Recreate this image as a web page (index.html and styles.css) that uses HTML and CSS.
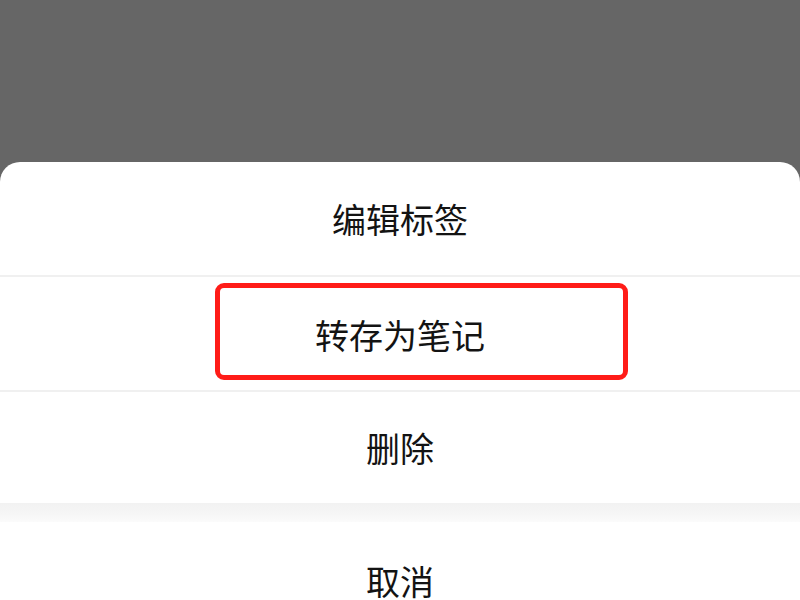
FILE: index.html
```html
<!DOCTYPE html>
<html lang="zh-CN">
<head>
    <meta charset="UTF-8">
    <meta name="viewport" content="width=device-width, initial-scale=1.0">
    <title>操作菜单</title>
    <link rel="stylesheet" href="styles.css">
</head>
<body>
    <!-- Dimmed background -->
    <div class="mask"></div>

    <!-- Action sheet -->
    <div class="sheet">
        <div class="sheet-group">
            <div class="sheet-item">编辑标签</div>
            <div class="sheet-item highlighted">
                <span>转存为笔记</span>
                <div class="mark-box"></div>
            </div>
            <div class="sheet-item">删除</div>
        </div>
        <div class="sheet-gap"></div>
        <div class="sheet-item cancel">取消</div>
    </div>
</body>
</html>
```

FILE: styles.css
```css
* {
    margin: 0;
    padding: 0;
    box-sizing: border-box;
}

body {
    font-family: "Noto Sans CJK SC", "Noto Sans", sans-serif;
    background: #666666;
    height: 100vh;
    overflow: hidden;
    display: flex;
    flex-direction: column;
}

.mask {
    height: 162px;
    flex-shrink: 0;
}

/* Action Sheet */
.sheet {
    flex: 1;
    min-height: 0;
    overflow: hidden;
    background: #ffffff;
    border-radius: 20px 20px 0 0;
    display: flex;
    flex-direction: column;
}

.sheet-group {
    display: flex;
    flex-direction: column;
    flex-shrink: 0;
}

.sheet-item {
    height: 115px;
    flex-shrink: 0;
    display: flex;
    align-items: center;
    justify-content: center;
    font-size: 34px;
    color: #131313;
    border-bottom: 2px solid #f0f0f0;
    position: relative;
}

.sheet-item:last-child {
    height: 111px;
    border-bottom: none;
}

.sheet-item.highlighted {
    padding-top: 2px;
}

/* Red annotation box */
.mark-box {
    position: absolute;
    left: 215px;
    top: 6px;
    width: 413px;
    height: 97px;
    border: 5px solid #ff1c18;
    border-radius: 9px;
}

.sheet-gap {
    height: 19px;
    flex-shrink: 0;
    background: linear-gradient(180deg, #f2f2f2 0%, #f6f6f6 60%, #fbfbfb 100%);
}

.sheet-item.cancel {
    border-bottom: none;
    height: 116px;
}
```
